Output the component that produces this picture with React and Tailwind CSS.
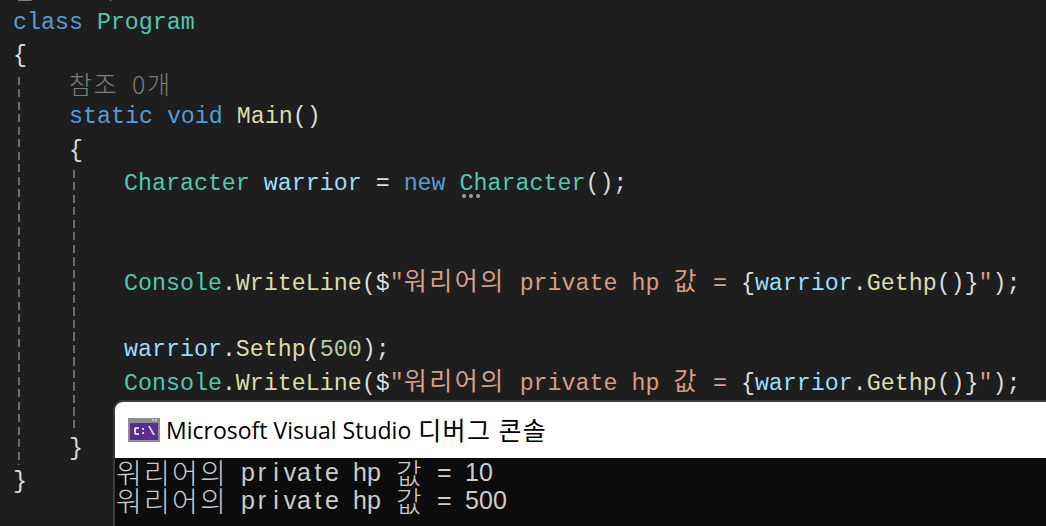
const MONO = "font-['Liberation_Mono','Noto_Sans_CJK_KR',monospace]";

const K = ({ children }) => <span className="text-[#569cd6]">{children}</span>;
const T = ({ children }) => <span className="text-[#4ec9b0]">{children}</span>;
const M = ({ children }) => <span className="text-[#dcdcaa]">{children}</span>;
const V = ({ children }) => <span className="text-[#9cdcfe]">{children}</span>;
const S = ({ children }) => <span className="text-[#d69d85]">{children}</span>;
const N = ({ children }) => <span className="text-[#b5cea8]">{children}</span>;
const H = ({ children }) => (
  <span className="font-['Noto_Sans_CJK_KR',sans-serif] text-[25px] tracking-[2.5px] leading-none">{children}</span>
);

function Line({ indent = 0, children }) {
  const pad = ["pl-[13px]", "pl-[69px]", "pl-[124px]"][indent];
  return <div className={`h-[33.2px] leading-[33.2px] whitespace-pre ${pad}`}>{children}</div>;
}

function Lens({ label, className }) {
  return (
    <div className={`whitespace-pre text-[#7d7d7d] font-['Noto_Sans_CJK_KR',sans-serif] text-[25px] font-light tracking-[1.5px] [word-spacing:7px] ${className}`}>
      {label}
    </div>
  );
}

function Guide({ className }) {
  return <div className={`absolute w-[2px] bg-[repeating-linear-gradient(to_bottom,#6a6a6a_0,#6a6a6a_8px,transparent_8px,transparent_12.5px)] ${className}`} />;
}

function WriteLine() {
  return (
    <>
      <T>Console</T>.<M>WriteLine</M>($<S>"<H>워리어의</H> private hp <H>값</H> = </S>
      {"{"}<V>warrior</V>.<M>Gethp</M>(){"}"}<S>"</S>);
    </>
  );
}

function ConsoleIcon() {
  return (
    <svg width="32" height="24" viewBox="0 0 32 24" className="shrink-0">
      <rect width="32" height="24" fill="#8d8d96" />
      <rect x="2" y="5" width="28" height="17" fill="#5c2d91" />
      <rect x="24" y="1" width="2" height="2" fill="#c9c9d0" />
      <rect x="27" y="1" width="2" height="2" fill="#c9c9d0" />
      <path d="M11 9H7v1H6v6h1v1h4v-2H8v-4h3zM14 10h2v2h-2zM14 14h2v2h-2zM20 8h2l5 9h-2z" fill="#ddd6ea" />
    </svg>
  );
}

function Cells({ text }) {
  return (
    <div className="h-[28px] leading-[28px] whitespace-pre flex items-center">
      {Array.from(text).map((c, i) => {
        const wide = c.charCodeAt(0) > 0x1000;
        return wide ? (
          <span key={i} className="inline-block w-[28px] text-center font-['Noto_Sans_CJK_KR',sans-serif] font-light text-[28px] leading-[28px]">{c}</span>
        ) : (
          <span key={i} className="inline-block w-[14px] text-center font-['Liberation_Sans',sans-serif] text-[25px] leading-[28px]">{c}</span>
        );
      })}
    </div>
  );
}

export default function App() {
  return (
    <div className={`relative w-[1046px] h-[526px] overflow-hidden bg-[#1e1e1e] text-[#dcdcdc] text-[23.3px] ${MONO}`}>
      <Guide className="left-[18px] top-[77px] h-[388px]" />
      <Guide className="left-[73px] top-[170px] h-[262px]" />

      <div className="h-[7px]" />
      <Lens label="참조 1개" className="-mt-[33px] pl-[13px] h-[33px] leading-[33px] -translate-y-[2px]" />
      <Line><K>class</K> <T>Program</T></Line>
      <Line>{"{"}</Line>
      <Lens label="참조 0개" className="pl-[69px] h-[28px] leading-[28px] -translate-y-[4px]" />
      <Line indent={1}><K>static</K> <K>void</K> <M>Main</M>()</Line>
      <Line indent={1}>{"{"}</Line>
      <Line indent={2}>
        <T>Character</T> <V>warrior</V> = <K>new</K>{" "}
        <span className="relative">
          <T>Character</T>
          <span className="absolute left-[2px] top-[23px] flex gap-[3px]">
            <span className="size-[4px] rounded-full bg-[#a0a0a0]" />
            <span className="size-[4px] rounded-full bg-[#a0a0a0]" />
            <span className="size-[4px] rounded-full bg-[#a0a0a0]" />
          </span>
        </span>
        ();
      </Line>
      <Line />
      <Line />
      <Line indent={2}><WriteLine /></Line>
      <Line />
      <Line indent={2}><V>warrior</V>.<M>Sethp</M>(<N>500</N>);</Line>
      <Line indent={2}><WriteLine /></Line>
      <Line />
      <Line indent={1}>{"}"}</Line>
      <Line>{"}"}</Line>

      <div className="absolute left-[113px] top-[400px] right-0 bottom-0 border-l-2 border-t-2 border-[#3a3a3a] rounded-tl-[10px] overflow-hidden flex flex-col">
        <div className="h-[56px] bg-white flex items-center gap-[6px] pl-[13px] shrink-0 text-black">
          <ConsoleIcon />
          <span className="font-['Open_Sans',sans-serif] text-[23px] whitespace-pre">Microsoft Visual Studio </span>
          <span className="-ml-[5px] font-['Noto_Sans_CJK_KR',sans-serif] text-[25px] tracking-[1.4px] whitespace-pre">디버그 콘솔</span>
        </div>
        <div className="flex-1 bg-[#0c0c0c] text-[#cccccc]">
          <Cells text="워리어의 private hp 값 = 10" />
          <Cells text="워리어의 private hp 값 = 500" />
        </div>
      </div>
    </div>
  );
}
